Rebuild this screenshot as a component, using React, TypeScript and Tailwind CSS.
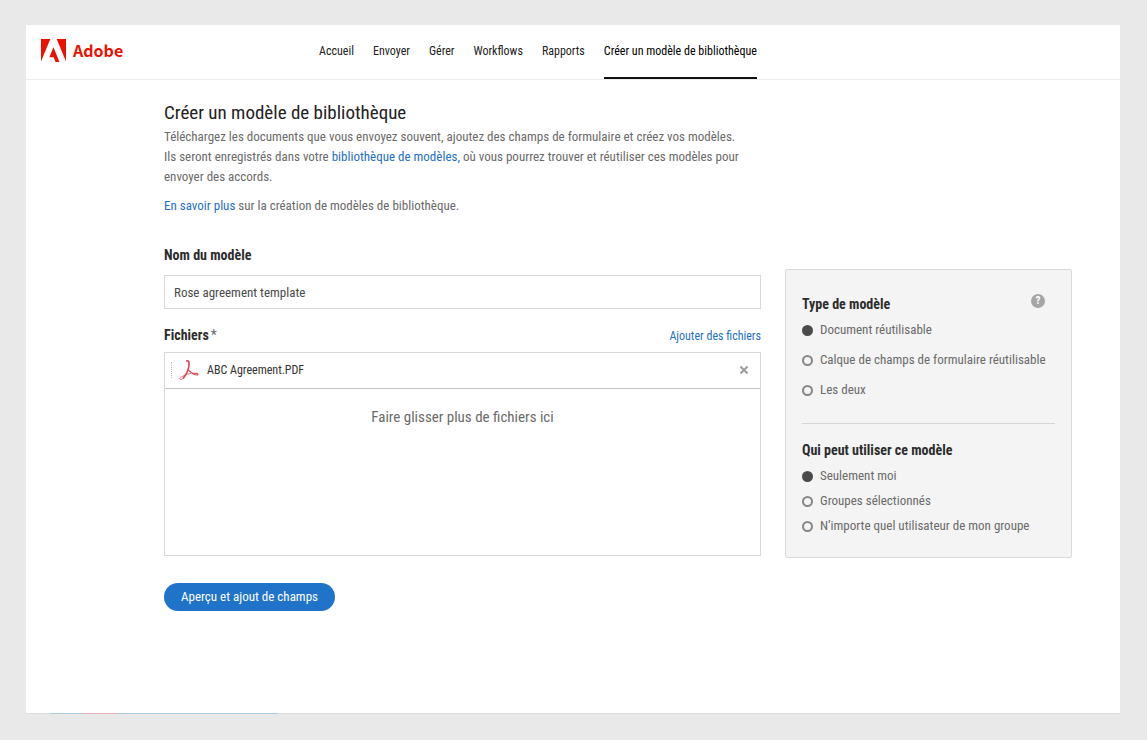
import { useState } from "react";

const navItems = ["Accueil", "Envoyer", "Gérer", "Workflows", "Rapports"];

const templateTypes = [
  "Document réutilisable",
  "Calque de champs de formulaire réutilisable",
  "Les deux",
];

const audiences = [
  "Seulement moi",
  "Groupes sélectionnés",
  "N’importe quel utilisateur de mon groupe",
];

export default function App() {
  return (
    <div className="flex min-h-screen flex-col bg-[#e9e9e9] pt-[25px] pr-[27px] pb-[26px] pl-[26px] font-['Roboto_Condensed','Liberation_Sans',sans-serif] text-[13px] leading-5 text-[#6a6a6a]">
      <div className="flex flex-1 flex-col bg-white">
        <Header />
        <main className="flex-1 pt-5 pr-12 pb-8 pl-[138px]">
          <Intro />
          <div className="flex items-start gap-6">
            <TemplateForm />
            <Options />
          </div>
        </main>
      </div>
      <BottomEdge />
    </div>
  );
}

function Header() {
  return (
    <header className="flex h-[55px] border-b border-[#ececec] pl-[15px]">
      <a href="#" className="flex w-[278px] items-center gap-[7px] pb-1" aria-label="Adobe">
        <svg width="25" height="23" viewBox="0 0 25 23" fill="#eb1000" aria-hidden="true">
          <path d="M0 0h9.3L0 22.4zM15.7 0H25v22.4zM12.5 8.3l5.9 14.6h-3.9l-1.8-4.6H8.4z" />
        </svg>
        <span className="font-['Noto_Sans_CJK_JP',sans-serif] text-base font-bold text-[#eb1000]">
          Adobe
        </span>
      </a>
      <nav className="flex gap-[19px] text-xs leading-[52px] text-[#222]">
        {navItems.map((item) => (
          <a key={item} href="#">
            {item}
          </a>
        ))}
        <a href="#" aria-current="page" className="h-[54px] border-b-2 border-[#111] text-black">
          Créer un modèle de bibliothèque
        </a>
      </nav>
    </header>
  );
}

function Intro() {
  return (
    <section className="max-w-[580px]">
      <h1 className="mb-px text-[19px] leading-[26px] text-[#222]">
        Créer un modèle de bibliothèque
      </h1>
      <p>
        Téléchargez les documents que vous envoyez souvent, ajoutez des champs de formulaire et
        créez vos modèles. Ils seront enregistrés dans votre{" "}
        <a href="#" className="text-[#1f70c1]">
          bibliothèque de modèles,
        </a>{" "}
        où vous pourrez trouver et réutiliser ces modèles pour envoyer des accords.
      </p>
      <p className="mt-[9px]">
        <a href="#" className="text-[#1f70c1]">
          En savoir plus
        </a>{" "}
        sur la création de modèles de bibliothèque.
      </p>
    </section>
  );
}

function TemplateForm() {
  const [name, setName] = useState("Rose agreement template");
  const [files, setFiles] = useState(["ABC Agreement.PDF"]);

  return (
    <form className="min-w-0 flex-1 pt-[29px]" onSubmit={(e) => e.preventDefault()}>
      <label htmlFor="template-name" className="block text-sm leading-5 font-bold text-[#2c2c2c]">
        Nom du modèle
      </label>
      <input
        id="template-name"
        value={name}
        onChange={(e) => setName(e.target.value)}
        className="mt-2.5 block h-[34px] w-full border border-[#d8d8d8] px-[9px] text-[#4b4b4b] outline-none"
      />

      <div className="mt-4 flex items-end justify-between">
        <h2 className="text-sm leading-5 font-bold text-[#2c2c2c]">
          Fichiers<span className="ml-0.5 font-normal text-[#6a6a6a]">*</span>
        </h2>
        <button type="button" className="text-xs leading-[18px] text-[#1f70c1]">
          Ajouter des fichiers
        </button>
      </div>
      <div className="mt-[7px] min-h-[204px] border border-[#d8d8d8]">
        {files.map((file) => (
          <div key={file} className="flex h-9 items-center border-b border-[#c4c4c4] pr-3 pb-0.5 pl-1.5">
            <span className="h-4 border-l border-dotted border-[#bbb]" />
            <PdfIcon />
            <span className="flex-1 text-xs text-[#333]">{file}</span>
            <button
              type="button"
              aria-label="Supprimer"
              onClick={() => setFiles(files.filter((f) => f !== file))}
            >
              <svg width="8" height="8" viewBox="0 0 8 8" stroke="#9b9b9b" strokeWidth="2">
                <path d="M0.5 0.5l7 7M7.5 0.5l-7 7" />
              </svg>
            </button>
          </div>
        ))}
        <p className="pt-[18px] text-center text-[15px]">Faire glisser plus de fichiers ici</p>
      </div>

      <button type="submit" className="mt-[27px] h-7 rounded-full bg-[#1f73c9] px-[17px] text-white">
        Aperçu et ajout de champs
      </button>
    </form>
  );
}

function Options() {
  return (
    <aside className="mt-[53px] w-[287px] shrink-0 rounded-xs border border-[#dadada] bg-[#f4f4f4] px-4 pt-6 pb-[21px]">
      <div className="relative">
        <RadioGroup title="Type de modèle" name="type" options={templateTypes} spacing="gap-2.5" />
        <button
          type="button"
          aria-label="Aide"
          className="absolute top-0 right-2.5 size-[14px] rounded-full bg-[#a6a6a6] text-[11px] leading-[14px] font-bold text-white"
        >
          ?
        </button>
      </div>
      <hr className="mt-[23px] mb-4 border-[#d5d5d5]" />
      <RadioGroup
        title="Qui peut utiliser ce modèle"
        name="audience"
        options={audiences}
        spacing="gap-[5px]"
      />
    </aside>
  );
}

function RadioGroup({
  title,
  name,
  options,
  spacing,
}: {
  title: string;
  name: string;
  options: string[];
  spacing: string;
}) {
  const [selected, setSelected] = useState(options[0]);

  return (
    <fieldset>
      <legend className="mb-1.5 text-sm leading-5 font-bold text-[#2c2c2c]">{title}</legend>
      <div className={`flex flex-col ${spacing}`}>
        {options.map((option) => (
          <label key={option} className="flex items-center gap-[7px] whitespace-nowrap">
            <input
              type="radio"
              name={name}
              checked={selected === option}
              onChange={() => setSelected(option)}
              className="size-[11px] shrink-0 appearance-none rounded-full border-2 border-[#868686] checked:border-[#4b4b4b] checked:bg-[#4b4b4b]"
            />
            {option}
          </label>
        ))}
      </div>
    </fieldset>
  );
}

function PdfIcon() {
  return (
    <svg
      width="20"
      height="20"
      viewBox="0 0 20 20"
      fill="none"
      stroke="#df4a58"
      strokeLinecap="round"
      className="mr-2 ml-[7px]"
      aria-hidden="true"
    >
      <path d="M7.800 1c1.700-.9 2.300 1 2.200 3.500-.1 4.500-2.500 9.500-5.500 13.500" strokeWidth="1.700" />
      <path d="M4.500 18c-1.500 2-4.300 1.800-3.500.4C2.200 16.500 8 14 12 13.300" strokeWidth="0.800" />
      <path d="M8.600 9.500c2 1.500 4 3.500 6.400 4.700 1.700.9 4 1.100 4 .2 0-1-2.500-1.400-5.500-1.100" strokeWidth="1.100" />
    </svg>
  );
}

// thin line under the page, coloured in places
function BottomEdge() {
  return (
    <div className="flex h-px bg-[#dedede]">
      <span className="ml-6 w-8 bg-[#a9cbe4]" />
      <span className="w-9 bg-[#e6b4ba]" />
      <span className="w-40 bg-[#a9cbe4]" />
    </div>
  );
}
